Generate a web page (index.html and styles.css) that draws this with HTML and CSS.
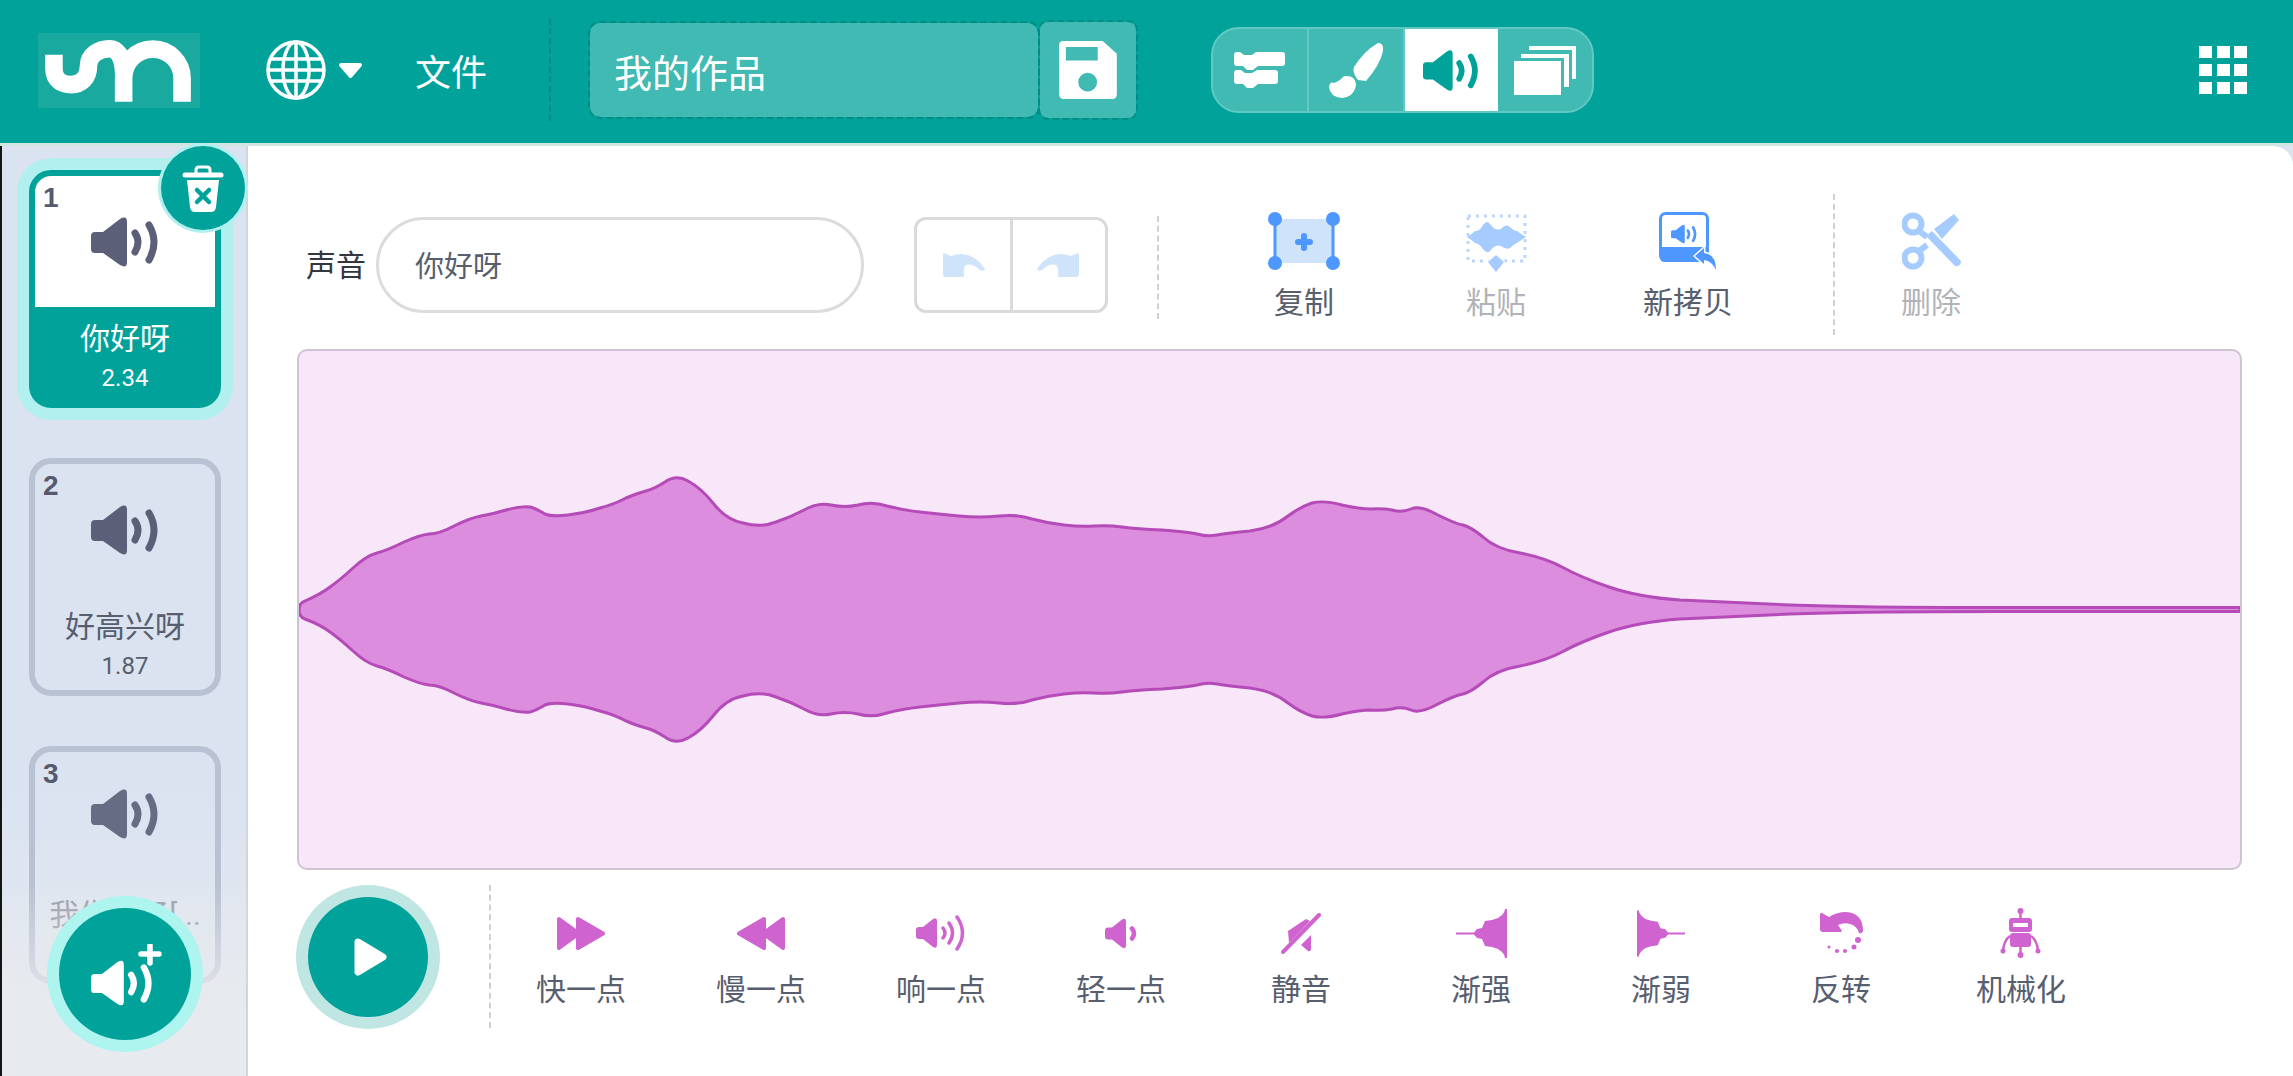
FILE: index.html
```html
<!DOCTYPE html>
<html>
<head>
    <meta charset="UTF-8" name="viewport" content="width=device-width, initial-scale=1.0"/>
    <title>我的作品</title>
    <link rel="stylesheet" href="styles.css">
</head>
<body>
    <svg class="defs" width="0" height="0">
        <symbol id="speaker" viewBox="0 0 68 52">
            <path d="M4 16H12L29 3Q36 -1 36 6V46Q36 53 29 49L12 37H4Q0 37 0 33V20Q0 16 4 16Z" fill="currentColor"/>
            <path d="M44 17Q50 26 44 36M58 9Q68 26 58 44" fill="none" stroke="currentColor" stroke-width="7" stroke-linecap="round"/>
        </symbol>
    </svg>

    <header class="topbar">
        <div class="logo">
            <svg width="162" height="75" viewBox="20 25 488 225">
                <path d="M68 90V130C68 170 95 180 120 180C150 180 172 160 172 125C172 90 205 72 235 72C255 72 278 90 278 150" fill="none" stroke="#fff" stroke-width="53"/>
                <path d="M278 232V161A88 88 0 0 1 454 161V232" fill="none" stroke="#fff" stroke-width="53"/>
            </svg>
        </div>
        <svg class="globe" width="60" height="60" viewBox="0 0 60 60" fill="none" stroke="#fff" stroke-width="3.5">
            <circle cx="30" cy="30" r="28"/>
            <ellipse cx="30" cy="30" rx="13" ry="28"/>
            <path d="M30 2V58M5 19H55M2 30H58M5 41H55"/>
        </svg>
        <svg class="caret" width="25" height="15" viewBox="0 0 25 15"><path d="M3 2H22L12.500 13Z" fill="#fff" stroke="#fff" stroke-width="4" stroke-linejoin="round"/></svg>
        <span class="menu-file">文件</span>
        <div class="bar-sep"></div>
        <div class="project-name">我的作品</div>
        <div class="save-btn">
            <svg width="58" height="58" viewBox="85 82 172 173">
                <path fill-rule="evenodd" fill="#fff" d="M97 82H215L257 120V241Q257 255 243 255H99Q85 255 85 241V94Q85 82 97 82ZM105 100V140H200V100ZM198 205A28 28 0 1 0 142 205A28 28 0 1 0 198 205Z"/>
            </svg>
        </div>
        <div class="tabs">
            <div class="tab">
                <svg width="51" height="36" viewBox="0 0 51 36" fill="#fff">
                    <path d="M3 0H6L10 3H18L22 0H48Q51 0 51 3V11Q51 14 48 14H24L19 18H13L9 14H3Q0 14 0 11V3Q0 0 3 0Z"/>
                    <path d="M3 18H7L11 21H18L23 18H41Q44 18 44 21V29Q44 32 41 32H24L19 36H13L9 32H3Q0 32 0 29V21Q0 18 3 18Z"/>
                </svg>
            </div>
            <div class="tab">
                <svg width="55" height="55" viewBox="0 0 55 55" fill="#fff">
                    <path d="M50 0Q56 0 55 8Q52 22 38 38L30 37Q24 30 26 24Q36 8 50 0Z"/>
                    <path d="M16 33Q28 32 28 42Q26 54 14 55Q2 54 1 44Q2 38 6 40Q12 38 16 33Z"/>
                </svg>
            </div>
            <div class="tab tab-on">
                <svg width="56" height="43"><use href="#speaker"/></svg>
            </div>
            <div class="tab">
                <svg width="62" height="49" viewBox="0 0 62 49" fill="#fff">
                    <rect x="0" y="15" width="47" height="34"/>
                    <path d="M7 8H55V41H50V12H7Z"/>
                    <path d="M15 0H62V33H58V4H15Z"/>
                </svg>
            </div>
        </div>
        <div class="apps">
            <i></i><i></i><i></i><i></i><i></i><i></i><i></i><i></i><i></i>
        </div>
    </header>

    <div class="work">
        <aside class="sidebar">
            <div class="card card-on">
                <div class="preview">
                    <span class="card-no">1</span>
                    <svg width="68" height="52"><use href="#speaker"/></svg>
                </div>
                <div class="card-name">你好呀</div>
                <div class="card-time">2.34</div>
                <div class="delete-btn">
                    <svg width="42" height="48" viewBox="0 0 42 48">
                        <path d="M14 9V6Q14 3 17 3H25Q28 3 28 6V9" fill="none" stroke="#fff" stroke-width="3"/>
                        <path d="M3 11H39" stroke="#fff" stroke-width="5" stroke-linecap="round"/>
                        <path d="M5 16H37L34 43Q33.500 48 29 48H13Q8.500 48 8 43Z" fill="#fff"/>
                        <path d="M15 26L27 38M27 26L15 38" stroke="#00a29a" stroke-width="4.500" stroke-linecap="round"/>
                    </svg>
                </div>
            </div>
            <div class="card">
                <div class="preview">
                    <span class="card-no">2</span>
                    <svg width="68" height="52"><use href="#speaker"/></svg>
                </div>
                <div class="card-name">好高兴呀</div>
                <div class="card-time">1.87</div>
            </div>
            <div class="card card-last">
                <div class="preview">
                    <span class="card-no">3</span>
                    <svg width="68" height="52"><use href="#speaker"/></svg>
                </div>
                <div class="card-name">我生气了[...</div>
            </div>
            <div class="side-fade"></div>
            <div class="add-btn">
                <svg width="72" height="64" viewBox="0 0 72 64">
                    <use href="#speaker" x="0" y="15" width="62" height="48"/>
                    <path d="M59 9H77M68 0V18" transform="translate(-9 1)" stroke="#fff" stroke-width="5.500" stroke-linecap="round"/>
                </svg>
            </div>
        </aside>

        <main class="editor">
            <div class="tool-row">
                <span class="name-label">声音</span>
                <div class="name-input">你好呀</div>
                <div class="undo-group">
                    <div class="undo-btn">
                        <svg width="43" height="24" viewBox="0 0 43 24"><path d="M2 0L9 3Q14 1 20 1Q34 2 43 16Q42 19 38 17Q30 10 24 12Q21 14 22 24H4Q1 24 1 21V3Q1 0 2 0Z" fill="#cfe3fb"/></svg>
                    </div>
                    <div class="undo-btn">
                        <svg class="flip" width="43" height="24" viewBox="0 0 43 24"><path d="M2 0L9 3Q14 1 20 1Q34 2 43 16Q42 19 38 17Q30 10 24 12Q21 14 22 24H4Q1 24 1 21V3Q1 0 2 0Z" fill="#cfe3fb"/></svg>
                    </div>
                </div>
                <div class="dash dash-short"></div>
                <div class="tool">
                    <div class="tool-icon">
                        <svg width="72" height="58" viewBox="0 0 72 58">
                            <rect x="7" y="7" width="58" height="44" fill="#cfe3fb"/>
                            <path d="M7 7V51M65 7V51" stroke="#4d97ff" stroke-width="3"/>
                            <circle cx="7" cy="7" r="7" fill="#4d97ff"/>
                            <circle cx="65" cy="7" r="7" fill="#4d97ff"/>
                            <circle cx="7" cy="51" r="7" fill="#4d97ff"/>
                            <circle cx="65" cy="51" r="7" fill="#4d97ff"/>
                            <path d="M36 24V36M30 30H42" stroke="#4d97ff" stroke-width="6" stroke-linecap="round"/>
                        </svg>
                    </div>
                    <span>复制</span>
                </div>
                <div class="tool tool-off">
                    <div class="tool-icon">
                        <svg width="61" height="60" viewBox="0 0 61 60">
                            <rect x="2" y="4" width="57" height="45" fill="none" stroke="#bcd7fb" stroke-width="3" stroke-dasharray="3 5"/>
                            <path d="M1 25Q6 22 9 19Q14 19 17 13Q21 7 25 13Q29 19 35 17Q40 11 44 15Q48 19 51 19Q55 22 60 25Q55 28 51 31Q48 32 44 36Q40 38 35 34Q29 32 25 38Q21 43 17 37Q14 32 9 31Q6 28 1 25Z" fill="#a6ccff"/>
                            <path d="M30 43L38 50L30 60L22 50Z" fill="#a6ccff" stroke="#fff" stroke-width="2" paint-order="stroke"/>
                        </svg>
                    </div>
                    <span>粘贴</span>
                </div>
                <div class="tool">
                    <div class="tool-icon">
                        <svg class="blue" width="58" height="58" viewBox="0 0 58 58">
                            <rect x="1.500" y="1.500" width="47" height="47" rx="5" fill="none" stroke="#4d97ff" stroke-width="3"/>
                            <path d="M1 35H49V45Q49 50 44 50H6Q1 50 1 45Z" fill="#4d97ff"/>
                            <use href="#speaker" x="12" y="12" width="26" height="20"/>
                            <path d="M36 44L45 36V41Q57 42 57 58Q53 49 45 48V52Z" fill="#4d97ff" stroke="#fff" stroke-width="3" paint-order="stroke" stroke-linejoin="round"/>
                        </svg>
                    </div>
                    <span>新拷贝</span>
                </div>
                <div class="dash dash-tall"></div>
                <div class="tool tool-off">
                    <div class="tool-icon">
                        <svg width="59" height="58" viewBox="0 0 59 58">
                            <circle cx="11" cy="12" r="8.500" fill="none" stroke="#a6ccff" stroke-width="6"/>
                            <circle cx="11" cy="46" r="8.500" fill="none" stroke="#a6ccff" stroke-width="6"/>
                            <path d="M17 19L25 25M17 39L25 33" stroke="#a6ccff" stroke-width="6"/>
                            <path d="M24 24L30 19L59 49Q59 55 53 54Z" fill="#a6ccff"/>
                            <path d="M32 17L52 2L57 8L40 27Z" fill="#a6ccff"/>
                        </svg>
                    </div>
                    <span>删除</span>
                </div>
            </div>

            <div class="wave-panel">
                <svg class="wave" viewBox="299 351 1941 517" preserveAspectRatio="none">
                    <path fill="#dd8ddd" stroke="#b44bb8" stroke-width="3" stroke-linejoin="round" d="M299 610Q299 603 305 601Q321 594 330 587Q340 580 353 568Q366 556 377 553Q388 550 404 542Q420 535 429 534Q439 534 454 526Q470 518 481 516Q493 514 506 510Q520 506 530 507Q535 508 545 514Q552 517 568 515Q585 513 600 508Q615 504 626 498Q638 493 646 491Q654 489 665 482Q676 474 688 481Q701 488 713 503Q726 520 743 523Q761 528 776 522Q791 517 804 510Q818 502 831 505Q845 508 858 505Q872 501 887 506Q902 510 920 512Q938 514 959 516Q980 518 999 516Q1018 514 1032 519Q1047 523 1064 525Q1081 527 1094 526Q1108 525 1122 527Q1137 529 1162 530Q1188 532 1197 534Q1207 537 1217 535Q1228 533 1250 531Q1273 528 1288 516Q1300 507 1312 503Q1324 500 1342 505Q1360 509 1371 509Q1382 508 1392 510Q1402 513 1411 509Q1420 505 1438 515Q1456 524 1463 525Q1471 527 1483 537Q1496 549 1520 553Q1545 558 1562 567Q1580 577 1609 587Q1638 597 1680 600Q1720 602 1790 605Q1857 607.500 2000 607.500L2240 607.500V611.500L2000 611.500Q1857 611.500 1790 614Q1720 617 1680 619Q1638 622 1609 632Q1580 642 1562 652Q1545 661 1520 666Q1496 670 1483 682Q1471 692 1463 694Q1456 695 1438 704Q1420 714 1411 710Q1402 706 1392 709Q1382 711 1371 710Q1360 710 1342 714Q1324 719 1312 716Q1300 712 1288 703Q1273 691 1250 688Q1228 686 1217 684Q1207 682 1197 685Q1188 687 1162 689Q1137 690 1122 692Q1108 694 1094 693Q1081 692 1064 694Q1047 696 1032 700Q1018 705 999 703Q980 701 959 703Q938 705 920 707Q902 709 887 713Q872 718 858 714Q845 711 831 714Q818 717 804 709Q791 702 776 697Q761 691 743 696Q726 699 713 716Q701 731 688 738Q676 745 665 737Q654 730 646 728Q638 726 626 721Q615 715 600 711Q585 706 568 704Q552 702 545 705Q535 711 530 712Q520 713 506 709Q493 705 481 703Q470 701 454 693Q439 685 429 685Q420 684 404 677Q388 669 377 666Q366 663 353 651Q340 639 330 632Q321 625 305 619Q299 617 299 610Z"/>
                </svg>
            </div>

            <div class="effects-row">
                <div class="play-btn">
                    <svg width="33" height="38" viewBox="0 0 33 38"><path d="M4 4L29 19L4 34Z" fill="#fff" stroke="#fff" stroke-width="7" stroke-linejoin="round"/></svg>
                </div>
                <div class="dash dash-effects"></div>
                <div class="effects">
                    <div class="effect">
                        <div class="effect-icon">
                            <svg width="48" height="33" viewBox="0 0 48 33"><path d="M2 2L22 16.500L2 31ZM21 2L46 16.500L21 31Z" fill="#cf63cf" stroke="#cf63cf" stroke-width="4" stroke-linejoin="round"/></svg>
                        </div>
                        <span>快一点</span>
                    </div>
                    <div class="effect">
                        <div class="effect-icon">
                            <svg width="48" height="33" viewBox="0 0 48 33"><path d="M46 2L26 16.500L46 31ZM27 2L2 16.500L27 31Z" fill="#cf63cf" stroke="#cf63cf" stroke-width="4" stroke-linejoin="round"/></svg>
                        </div>
                        <span>慢一点</span>
                    </div>
                    <div class="effect">
                        <div class="effect-icon">
                            <svg width="51" height="38" viewBox="0 0 51 38">
                                <path d="M3 13H7L17 5Q21 3 21 7V31Q21 35 17 33L7 25H3Q0 25 0 22V16Q0 13 3 13Z" fill="#cf63cf"/>
                                <path d="M27 14Q31 19 27 24M33 9Q40 19 33 29M41 3Q52 19 41 35" fill="none" stroke="#cf63cf" stroke-width="3.500" stroke-linecap="round"/>
                            </svg>
                        </div>
                        <span>响一点</span>
                    </div>
                    <div class="effect">
                        <div class="effect-icon">
                            <svg width="32" height="33" viewBox="0 2.500 32 33">
                                <path d="M3 13H7L17 5Q21 3 21 7V31Q21 35 17 33L7 25H3Q0 25 0 22V16Q0 13 3 13Z" fill="#cf63cf"/>
                                <path d="M27 14Q31 19 27 24" fill="none" stroke="#cf63cf" stroke-width="4.500" stroke-linecap="round"/>
                            </svg>
                        </div>
                        <span>轻一点</span>
                    </div>
                    <div class="effect">
                        <div class="effect-icon">
                            <svg width="40" height="41" viewBox="0 0 40 41" fill="#cf63cf">
                                <path d="M2 39L38 2" stroke="#cf63cf" stroke-width="4" stroke-linecap="round"/>
                                <path d="M7 18L25 6L29 8L8 30Z"/>
                                <path d="M20 32L30 22V36Q30 39 27 38Z"/>
                            </svg>
                        </div>
                        <span>静音</span>
                    </div>
                    <div class="effect">
                        <div class="effect-icon">
                            <svg width="51" height="49" viewBox="0 0 51 49"><path d="M0 23.500H18L21 20L26 19L29 12L36 11L42 9L46 6Q49 3 49 0H51V49H49Q49 46 46 43L42 40L36 38L29 37L26 30L21 29L18 25.500H0Z" fill="#cf63cf"/></svg>
                        </div>
                        <span>渐强</span>
                    </div>
                    <div class="effect">
                        <div class="effect-icon">
                            <svg class="flip" width="48" height="49" viewBox="0 0 51 49"><path d="M0 23.500H18L21 20L26 19L29 12L36 11L42 9L46 6Q49 3 49 0H51V49H49Q49 46 46 43L42 40L36 38L29 37L26 30L21 29L18 25.500H0Z" fill="#cf63cf"/></svg>
                        </div>
                        <span>渐弱</span>
                    </div>
                    <div class="effect">
                        <div class="effect-icon">
                            <svg width="43" height="42" viewBox="0 0 43 42" fill="#cf63cf">
                                <path d="M2 1L9 5Q17 0 26 0Q43 1 43 19Q42 22 39 21Q37 14 30 12Q24 10 18 13L22 19Q22 20 20 20H3Q0 20 0 17V3Q0 0 2 1Z"/>
                                <circle cx="38" cy="28" r="3"/>
                                <circle cx="34" cy="35" r="2.500"/>
                                <circle cx="25" cy="39" r="2"/>
                                <circle cx="17" cy="39" r="2"/>
                                <circle cx="9" cy="35" r="1.500"/>
                            </svg>
                        </div>
                        <span>反转</span>
                    </div>
                    <div class="effect">
                        <div class="effect-icon">
                            <svg width="42" height="50" viewBox="0 0 42 50" fill="#cf63cf">
                                <circle cx="20.500" cy="3" r="3"/>
                                <path d="M20.500 5V11M20.500 39V46" stroke="#cf63cf" stroke-width="2.500"/>
                                <path fill-rule="evenodd" d="M12 10H29Q32 10 32 13V21Q32 24 29 24H12Q9 24 9 21V13Q9 10 12 10ZM13 15V19H28V15Z"/>
                                <rect x="10" y="25" width="21" height="14" rx="3"/>
                                <path d="M10 28Q4 32 3 43M31 28Q37 32 38 43" fill="none" stroke="#cf63cf" stroke-width="2.500"/>
                                <circle cx="3" cy="43" r="2.500"/>
                                <circle cx="38" cy="43" r="2.500"/>
                                <circle cx="20.500" cy="47" r="3"/>
                            </svg>
                        </div>
                        <span>机械化</span>
                    </div>
                </div>
            </div>
        </main>
    </div>
</body>
</html>
```

FILE: styles.css
```css
* {
    box-sizing: border-box;
}
html, body {
    margin: 0;
    height: 100%;
}
body {
    width: 2293px;
    height: 1076px;
    overflow: hidden;
    display: flex;
    flex-direction: column;
    background: #dbe3f1;
    font-family: Roboto, "Noto Sans CJK SC", sans-serif;
    color: #575e6e;
}
.defs {
    position: absolute;
}
.flip {
    transform: scaleX(-1);
}

/* top bar */
.topbar {
    height: 146px;
    flex: none;
    display: flex;
    align-items: center;
    padding: 0 46px 3px 38px;
    background: #00a29a;
    border-bottom: 3px solid #cfe5e2;
}
.logo {
    width: 162px;
    height: 75px;
    background: #1aa99f;
}
.logo svg {
    display: block;
}
.globe {
    margin-left: 66px;
}
.caret {
    margin-left: 12px;
}
.menu-file {
    margin-left: 52px;
    font-size: 36px;
    color: #fff;
}
.bar-sep {
    margin-left: 62px;
    height: 102px;
    border-left: 2px dashed #008c85;
}
.project-name {
    margin-left: 39px;
    width: 448px;
    height: 94px;
    padding-left: 24px;
    display: flex;
    align-items: center;
    font-size: 38px;
    color: #fff;
    background: #40bab2;
    border-radius: 10px;
    outline: 2px dashed #008c85;
}
.save-btn {
    margin-left: 2px;
    width: 96px;
    height: 96px;
    display: flex;
    align-items: center;
    justify-content: center;
    background: #40bab2;
    border-radius: 8px;
    outline: 2px dashed #008c85;
}
.tabs {
    margin-left: 75px;
    width: 383px;
    height: 86px;
    display: flex;
    overflow: hidden;
    background: #40bab2;
    border: 2px solid #62c9c2;
    border-radius: 28px;
}
.tab {
    flex: 1;
    display: flex;
    align-items: center;
    justify-content: center;
    border-right: 2px solid #62c9c2;
}
.tab:last-child {
    border-right: 0;
}
.tab-on {
    background: #fff;
    color: #00a29a;
    border-right: 0;
}
.apps {
    margin-left: auto;
    display: grid;
    grid-template-columns: repeat(3, 13px);
    grid-auto-rows: 12px;
    column-gap: 4.5px;
    row-gap: 6px;
}
.apps i {
    background: #fff;
}

/* sound list */
.work {
    flex: 1;
    display: flex;
    min-height: 0;
}
.sidebar {
    position: relative;
    width: 248px;
    flex: none;
    display: flex;
    flex-direction: column;
    gap: 50px;
    padding: 24px 0 0 27px;
    background: linear-gradient(#dbe3f1 70%, #e9ebee);
    border-left: 2px solid #141414;
    border-right: 2px solid #d3d5da;
}
.card {
    position: relative;
    width: 192px;
    height: 238px;
    flex: none;
    border: 6px solid #b9c2d3;
    border-radius: 22px;
    text-align: center;
    color: #575e6e;
}
.card-on {
    background: #00a29a;
    border-color: #00a29a;
    box-shadow: 0 0 0 12px #b2f0f0;
    color: #fff;
}
.card-last {
    color: #9a9eab;
}
.preview {
    position: relative;
    height: 131px;
    display: flex;
    align-items: center;
    justify-content: center;
    color: #5c5f78;
    border-radius: 16px 16px 0 0;
}
.card-on .preview {
    background: #fff;
}
.card-last .preview {
    padding-bottom: 8px;
    color: #666d82;
}
.card-no {
    position: absolute;
    left: 8px;
    top: 6px;
    font-family: "Liberation Sans", sans-serif;
    font-weight: 700;
    font-size: 28px;
    line-height: 32px;
    color: #555a6e;
}
.card-name {
    margin-top: 14px;
    font-size: 30px;
    line-height: 36px;
    white-space: nowrap;
}
.card-time {
    margin-top: 7px;
    font-size: 24px;
    line-height: 28px;
}
.delete-btn {
    position: absolute;
    top: -30px;
    right: -30px;
    width: 84px;
    height: 84px;
    display: flex;
    align-items: center;
    justify-content: center;
    background: #00a29a;
    border-radius: 50%;
    box-shadow: 0 0 0 3px #b2f0f0;
}
.side-fade {
    position: absolute;
    left: 0;
    right: 0;
    bottom: 0;
    height: 190px;
    background: linear-gradient(rgba(225, 230, 240, 0), rgba(231, 234, 238, 0.85) 60%);
}
.add-btn {
    position: absolute;
    left: 57px;
    top: 762px;
    width: 132px;
    height: 132px;
    padding: 4px 0 0 3px;
    display: flex;
    align-items: center;
    justify-content: center;
    color: #fff;
    background: #00a29a;
    border-radius: 50%;
    box-shadow: 0 0 0 12px #aef4ef;
}

/* editor */
.editor {
    flex: 1;
    padding: 48px 51px 0 49px;
    background: #fff;
    border-top-right-radius: 20px;
}
.tool-row {
    height: 141px;
    display: flex;
    align-items: center;
}
.name-label {
    margin-left: 9px;
    padding-bottom: 3px;
    font-size: 30px;
    color: #33353f;
}
.name-input {
    margin-left: 10px;
    width: 488px;
    height: 96px;
    padding: 0 0 2px 36px;
    display: flex;
    align-items: center;
    font-size: 29px;
    border: 3px solid #dcdcdc;
    border-radius: 48px;
}
.undo-group {
    margin-left: 50px;
    width: 194px;
    height: 96px;
    display: flex;
    border: 3px solid #dadada;
    border-radius: 12px;
}
.undo-btn {
    flex: 1;
    display: flex;
    align-items: center;
    justify-content: center;
    border-right: 3px solid #dadada;
}
.undo-btn:last-child {
    border-right: 0;
}
.dash {
    border-left: 2px dashed #d0d0d0;
    flex: none;
}
.dash-short {
    margin: 6px 49px 0 49px;
    height: 103px;
}
.dash-tall {
    margin-left: 49px;
    height: 141px;
}
.tool {
    width: 192px;
    display: flex;
    flex-direction: column;
    align-items: center;
    font-size: 30px;
    line-height: 36px;
    margin-top: 4px;
}
.tool-icon {
    height: 58px;
    margin-bottom: 15px;
}
.tool-icon svg {
    display: block;
}
.tool-off {
    color: #b2b3b8;
}
.blue {
    color: #4d97ff;
}
.wave-panel {
    margin-top: 14px;
    height: 521px;
    background: #f8e7f8;
    border: 2px solid #cfc4d2;
    border-radius: 10px;
    overflow: hidden;
}
.wave {
    display: block;
    width: 100%;
    height: 100%;
}
.effects-row {
    margin-top: 15px;
    height: 143px;
    display: flex;
    align-items: center;
}
.play-btn {
    margin-left: 11px;
    width: 120px;
    height: 120px;
    padding-left: 4px;
    display: flex;
    align-items: center;
    justify-content: center;
    background: #00a29a;
    border-radius: 50%;
    box-shadow: 0 0 0 12px #bfe6e3;
}
.dash-effects {
    margin-left: 61px;
    height: 143px;
}
.effects {
    display: grid;
    grid-template-columns: repeat(9, 180px);
}
.effect {
    display: flex;
    flex-direction: column;
    align-items: center;
    font-size: 30px;
    line-height: 36px;
}
.effect-icon {
    height: 55px;
    margin-bottom: 11px;
    display: flex;
    align-items: center;
}
```
